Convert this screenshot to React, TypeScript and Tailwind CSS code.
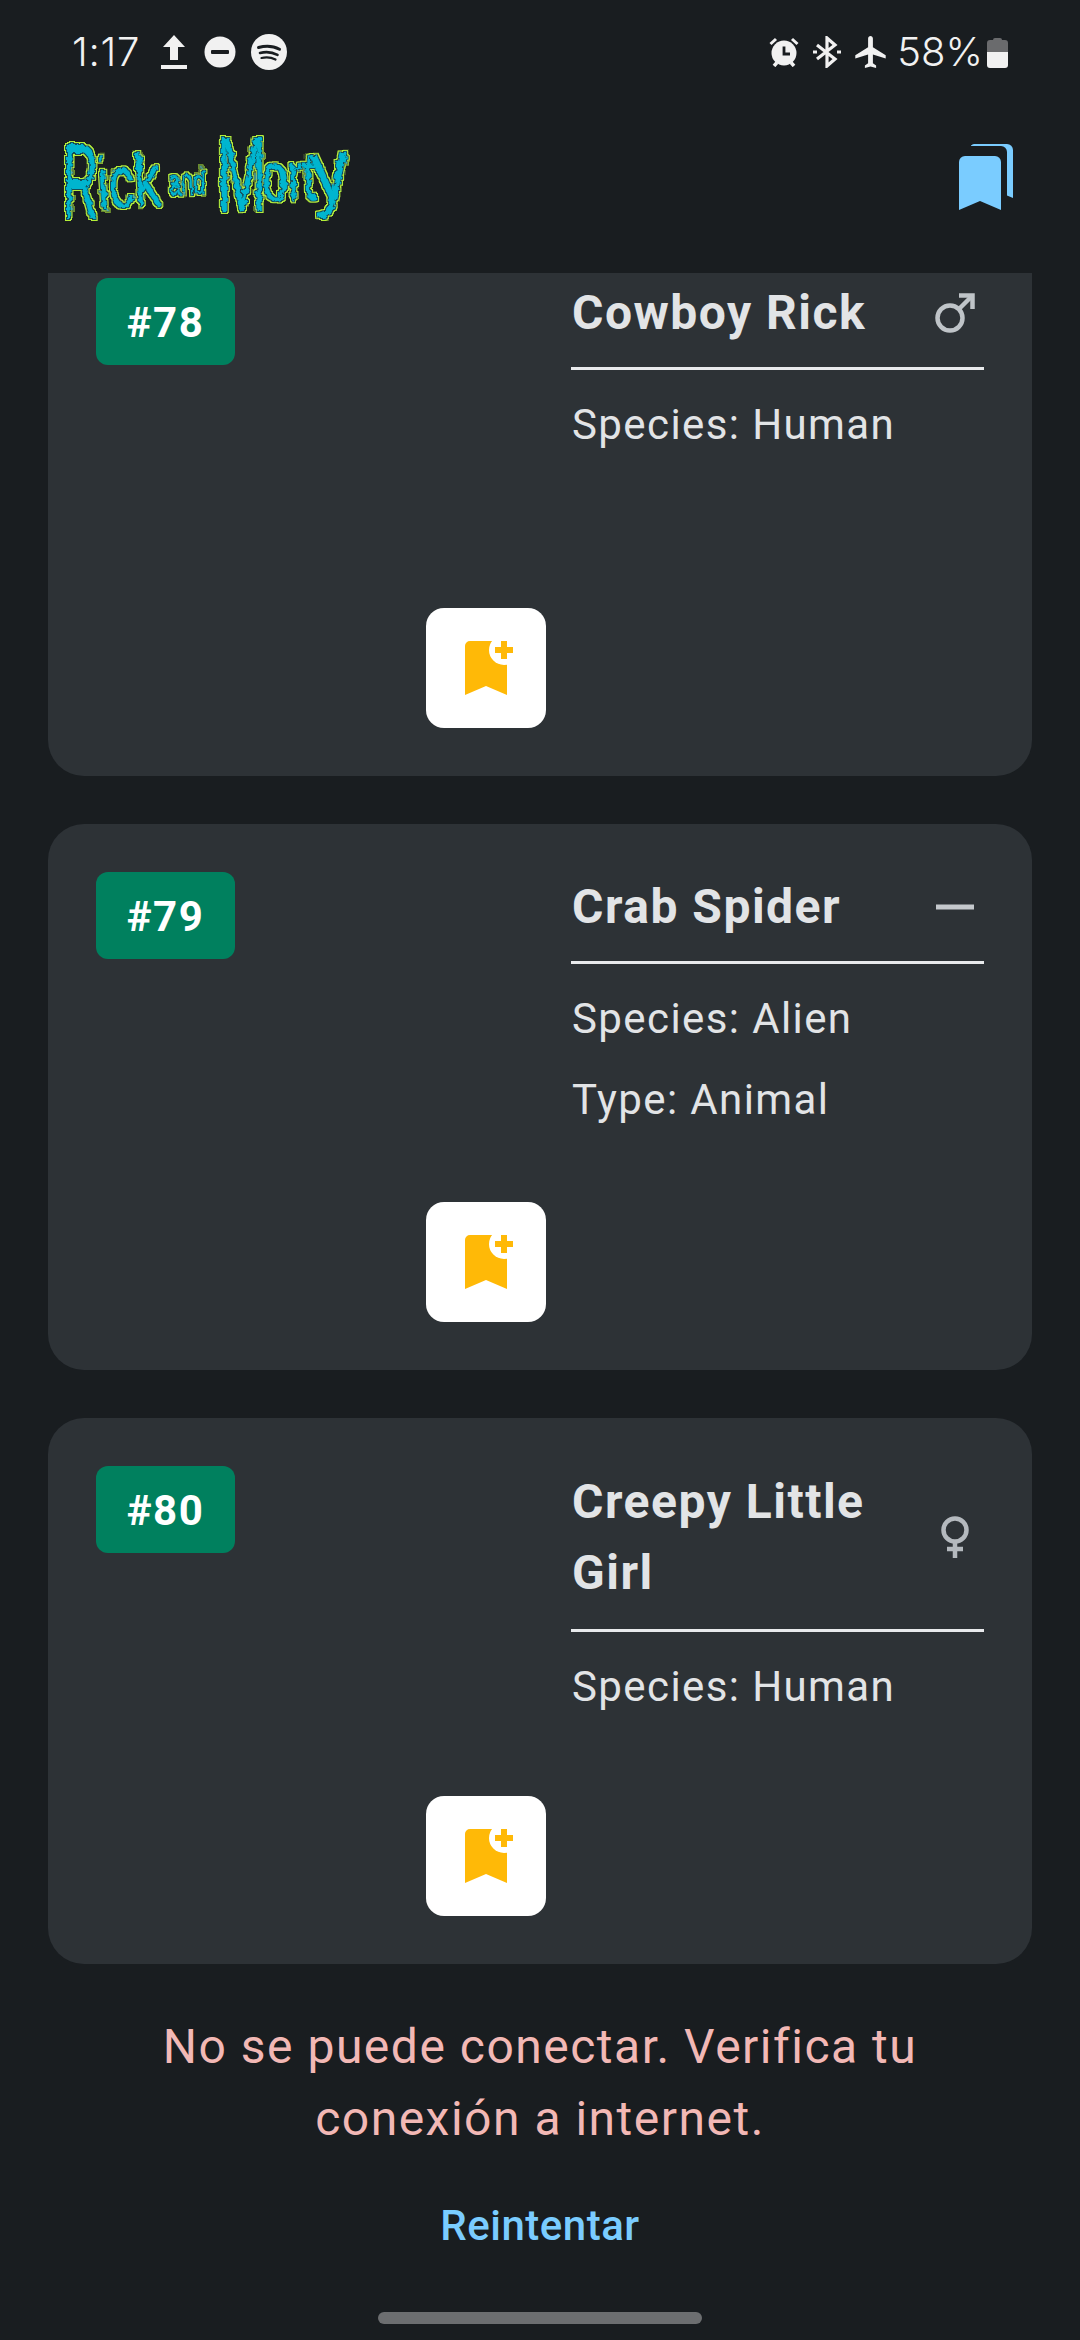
import React from "react";

const Upload = () => (
  <svg viewBox="0 0 26 34" className="w-[26px] h-[34px] shrink-0" fill="#f1f1f1">
    <path d="M9 25V12H2L13 0l11 12h-7v13z" />
    <path d="M0 30h26v4H0z" />
  </svg>
);
const Dnd = () => (
  <svg viewBox="0 0 32 32" className="w-[32px] h-[32px] shrink-0">
    <circle cx="16" cy="16" r="15.5" fill="#f1f1f1" />
    <rect x="7" y="14" width="18" height="4" rx="1" fill="#191d20" />
  </svg>
);
const Spotify = () => (
  <svg viewBox="0 0 36 36" className="w-[36px] h-[36px] shrink-0">
    <circle cx="18" cy="18" r="18" fill="#f1f1f1" />
    <path d="M7.5 13.5c7-2 15-1.500 21 1.800" stroke="#191d20" strokeWidth="3" fill="none" strokeLinecap="round" />
    <path d="M9 19c6-1.600 12-1 17.500 1.800" stroke="#191d20" strokeWidth="2.600" fill="none" strokeLinecap="round" />
    <path d="M10.500 24c5-1.200 9.500-.8 14 1.500" stroke="#191d20" strokeWidth="2.200" fill="none" strokeLinecap="round" />
  </svg>
);
const Alarm = () => (
  <svg viewBox="0 0 30 30" className="w-[30px] h-[30px] shrink-0">
    <circle cx="15" cy="16" r="12.500" fill="#f1f1f1" />
    <path d="M1.500 7l5.500-5M28.500 7l-5.500-5" stroke="#f1f1f1" strokeWidth="3" />
    <path d="M5 29l3-3.500M25 29l-3-3.500" stroke="#f1f1f1" strokeWidth="3.500" />
    <path d="M15 9.500V17h6" stroke="#191d20" strokeWidth="2.800" fill="none" />
  </svg>
);
const Bluetooth = () => (
  <svg viewBox="0 0 28 32" className="w-[28px] h-[32px] shrink-0" fill="none" stroke="#f1f1f1" strokeWidth="3.200">
    <path d="M4 9l18 14-8 7V2l8 7L4 23" />
    <path d="M0 16h4M24 16h4" />
  </svg>
);
const Plane = () => (
  <svg viewBox="2 2 19 20" className="w-[31px] h-[32px] shrink-0" fill="#f1f1f1">
    <path d="M21 16v-2l-8-5V3.500c0-.83-.67-1.500-1.500-1.500S10 2.670 10 3.500V9l-8 5v2l8-2.500V19l-2 1.500V22l3.500-1 3.500 1v-1.500L13 19v-5.500l8 2.500z" />
  </svg>
);
const Battery = () => (
  <svg viewBox="0 0 21 31" className="w-[21px] h-[31px] shrink-0">
    <path d="M6 3a2 2 0 0 1 2-2h5a2 2 0 0 1 2 2h3a3 3 0 0 1 3 3v9H0V6a3 3 0 0 1 3-3z" fill="#6a6b6d" />
    <path d="M0 15h21v13a3 3 0 0 1-3 3H3a3 3 0 0 1-3-3z" fill="#f1f1f1" />
  </svg>
);
const Bookmarks = () => (
  <svg viewBox="0 0 54 66" className="w-[54px] h-[66px]" fill="#7accff">
    <path d="M12 1.500A6 6 0 0 1 15 0h33a6 6 0 0 1 6 6v48l-6-2.500V8a6 6 0 0 0-6-6H12z" />
    <path d="M6 12h30a6 6 0 0 1 6 6v48l-21-9-21 9V18a6 6 0 0 1 6-6z" />
  </svg>
);
const BookmarkPlus = () => (
  <svg viewBox="0 0 60 60" className="w-[60px] h-[60px]">
    <path d="M9 57V8a5 5 0 0 1 5-5h37v54l-21-9z" fill="#ffb907" />
    <circle cx="48" cy="12" r="15" fill="#fff" />
    <path d="M45 3h6v6h6v6h-6v6h-6v-6h-6V9h6z" fill="#ffb907" />
  </svg>
);
const Male = () => (
  <svg viewBox="0 0 40 40" className="w-[40px] h-[40px]" fill="none" stroke="#bfc4c8" strokeWidth="4.500">
    <circle cx="15" cy="25" r="12.500" />
    <path d="M24 16L37 3" />
    <path d="M24 2.500h13.500V16" />
  </svg>
);
const Female = () => (
  <svg viewBox="0 0 30 42" className="w-[30px] h-[42px]" fill="none" stroke="#b4b9be" strokeWidth="4.500">
    <circle cx="15" cy="14" r="11.500" />
    <path d="M15 26v16M7 33h16" />
  </svg>
);
const Minus = () => (
  <svg viewBox="0 0 40 6" className="w-[40px] h-[6px]">
    <rect x="1" y="0.500" width="38" height="5" fill="#c4c8cc" />
  </svg>
);

const Logo = () => (
  <svg viewBox="0 0 296 96" className="w-[296px] h-[96px] overflow-visible" style={{ fontFamily: "'Liberation Sans', sans-serif" }}>
    <defs>
      <filter id="slime" x="-10%" y="-20%" width="120%" height="140%">
        <feTurbulence type="fractalNoise" baseFrequency="0.18" numOctaves="2" seed="4" result="n" />
        <feDisplacementMap in="SourceGraphic" in2="n" scale="7" result="d" />
        <feMorphology in="d" operator="dilate" radius="1" result="d1" />
        <feFlood floodColor="#15505a" />
        <feComposite in2="d1" operator="in" result="dark" />
        <feMorphology in="d" operator="dilate" radius="2" result="d2" />
        <feFlood floodColor="#b4ee38" />
        <feComposite in2="d2" operator="in" result="lime" />
        <feMerge>
          <feMergeNode in="lime" />
          <feMergeNode in="dark" />
          <feMergeNode in="d" />
        </feMerge>
      </filter>
    </defs>
    <g filter="url(#slime)" fill="#05b5cf" fontWeight="400">
      <text transform="translate(1 78) scale(.9 2)" fontSize="54">R</text>
      <text transform="translate(37 68) rotate(-4) scale(.95 1.36)" fontSize="54">ick</text>
      <text transform="translate(107 54) rotate(-2) scale(.85 1.35)" fontSize="26">and</text>
      <text transform="translate(155 70) scale(1.1 2)" fontSize="54">M</text>
      <text transform="translate(201 60) rotate(-2) scale(.85 1.25)" fontSize="54">ort</text>
      <text transform="translate(252 60) rotate(-6) scale(1.4 1.6)" fontSize="54">y</text>
    </g>
  </svg>
);

type C = { id: string; name: string; gender: "m" | "f" | "n"; lines: string[]; wrapped?: boolean };

const Card = ({ c }: { c: C }) => (
  <div className="h-[546px] shrink-0 rounded-[36px] bg-[#2d3236] p-[48px] flex gap-[25px]">
    <div className="w-[450px] shrink-0 flex flex-col justify-between">
      <div className="w-[139px] h-[87px] pt-[2px] rounded-[12px] bg-[#00805e] flex items-center justify-center text-white font-bold text-[42px] tracking-[1.5px]">
        {c.id}
      </div>
      <div className="self-end w-[120px] h-[120px] rounded-[18px] bg-white flex items-center justify-center">
        <BookmarkPlus />
      </div>
    </div>
    <div className="flex-1 min-w-0">
      <div className={`flex items-center justify-between border-b-[3px] border-[#e8eaec] pl-[1px] ${c.wrapped ? "pb-[21px]" : "pb-[20px]"}`}>
        <div className={`w-[310px] text-[48px] font-bold tracking-[1.5px] text-[#e2e4e6] ${c.wrapped ? "leading-[71px]" : "leading-[69px]"}`}>{c.name}</div>
        <div className="w-[40px] mr-[9px] flex items-center justify-center">
          {c.gender === "m" ? <Male /> : c.gender === "f" ? <Female /> : <Minus />}
        </div>
      </div>
      <div className="pl-[1px] pt-[4px]">
        {c.lines.map((l) => (
          <div key={l} className="pt-[21px] text-[42px] leading-[60px] tracking-[1.4px] text-[#e2e4e6]">{l}</div>
        ))}
      </div>
    </div>
  </div>
);

const cards: C[] = [
  { id: "#78", name: "Cowboy Rick", gender: "m", lines: ["Species: Human"] },
  { id: "#79", name: "Crab Spider", gender: "n", lines: ["Species: Alien", "Type: Animal"] },
  { id: "#80", name: "Creepy Little Girl", gender: "f", lines: ["Species: Human"], wrapped: true },
];

export default function App() {
  return (
    <div className="relative w-[1080px] h-[2340px] overflow-hidden bg-[#191d20] flex flex-col font-['Roboto',sans-serif]">
      <div className="h-[104px] shrink-0 flex items-center justify-between pl-[72px] pr-[72px]">
        <div className="flex items-center">
          <span className="text-[40px] font-['Inter',sans-serif] font-light tracking-[0.75px] text-[#f1f1f1] w-[89px]">1:17</span>
          <Upload />
          <span className="w-[17px]" />
          <Dnd />
          <span className="w-[15px]" />
          <Spotify />
        </div>
        <div className="flex items-center">
          <Alarm />
          <span className="w-[14px]" />
          <Bluetooth />
          <span className="w-[14px]" />
          <Plane />
          <span className="text-[40px] font-['Inter',sans-serif] font-light text-[#f1f1f1] ml-[11px] mr-[4px]">58%</span>
          <Battery />
        </div>
      </div>
      <div className="h-[169px] shrink-0 flex items-center justify-between pl-[62px] pr-[67px]">
        <Logo />
        <div className="mb-[24px]">
          <Bookmarks />
        </div>
      </div>
      <div className="flex-1 min-h-0 overflow-hidden px-[48px]">
        <div className="-mt-[43px] flex flex-col gap-[48px]">
          {cards.map((c) => (
            <Card key={c.id} c={c} />
          ))}
        </div>
        <div className="mt-[47px] text-center text-[#f2b8b5] text-[48px] leading-[72px] tracking-[1.5px] px-[60px]">
          No se puede conectar. Verifica tu conexión a internet.
        </div>
        <div className="mt-[41px] text-center text-[#7accff] text-[42px] leading-[60px] font-medium tracking-[0.5px]">Reintentar</div>
      </div>
      <div className="absolute left-[378px] top-[2312px] w-[324px] h-[12px] rounded-full bg-[#6c6e70]" />
    </div>
  );
}
